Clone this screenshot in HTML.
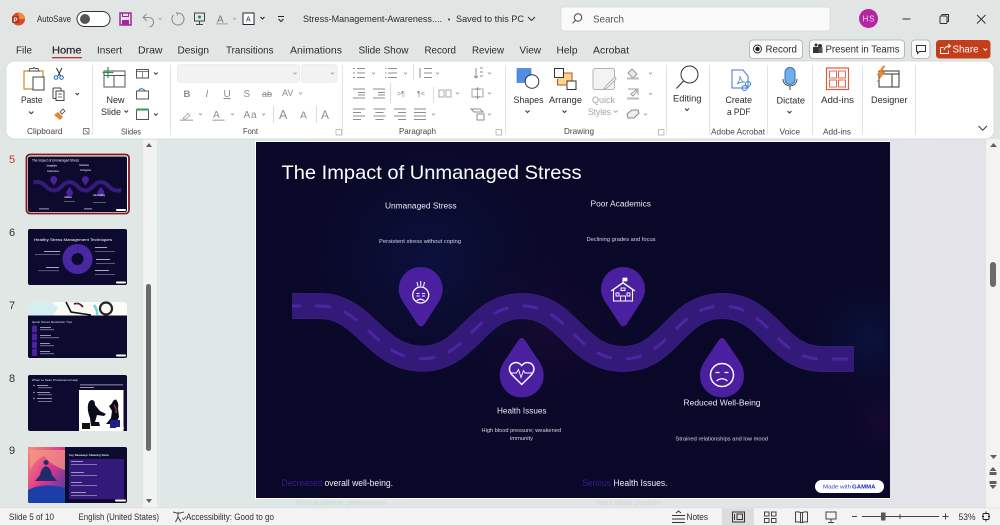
<!DOCTYPE html>
<html lang="en"><head><meta charset="utf-8"><title>PowerPoint</title>
<style>
html,body{margin:0;padding:0;background:#e1e6e4;overflow:hidden}
svg{display:block;font-family:"Liberation Sans",sans-serif}
.t{font-size:9.5px;fill:#2b2b2b}
.g{font-size:9px;fill:#a3a3a3}
.l{font-size:8.5px;fill:#444}
.ic{fill:none;stroke:#555;stroke-width:1}
.ch{fill:none;stroke:#555;stroke-width:1}
.sl{fill:#fff}
.ttl{fill:#fff;font-size:19.5px}
</style></head><body>
<svg width="1000" height="525" viewBox="0 0 1000 525" xmlns="http://www.w3.org/2000/svg">
<defs>
<linearGradient id="cv" x1="0" x2="1" y1="0" y2="0"><stop offset="0" stop-color="#dfe8e6"/><stop offset=".45" stop-color="#e0e6e6"/><stop offset="1" stop-color="#e4e3ea"/></linearGradient>
<radialGradient id="sA" gradientUnits="userSpaceOnUse" cx="430" cy="260" r="170"><stop offset="0" stop-color="#0c1444" stop-opacity=".75"/><stop offset="1" stop-color="#0a0828" stop-opacity="0"/></radialGradient>
<radialGradient id="sB" gradientUnits="userSpaceOnUse" cx="550" cy="330" r="100"><stop offset="0" stop-color="#1c0a36" stop-opacity=".7"/><stop offset="1" stop-color="#0a0828" stop-opacity="0"/></radialGradient>
<radialGradient id="sC" gradientUnits="userSpaceOnUse" cx="870" cy="340" r="80"><stop offset="0" stop-color="#0b1a4a" stop-opacity=".6"/><stop offset="1" stop-color="#0a0828" stop-opacity="0"/></radialGradient>
<radialGradient id="sD" gradientUnits="userSpaceOnUse" cx="885" cy="420" r="60"><stop offset="0" stop-color="#1e0a3a" stop-opacity=".6"/><stop offset="1" stop-color="#0a0828" stop-opacity="0"/></radialGradient>
<linearGradient id="pink" x1="0" x2="1" y1="0" y2="1"><stop offset="0" stop-color="#f5907c"/><stop offset=".5" stop-color="#e0358c"/><stop offset="1" stop-color="#2a3fa8"/></linearGradient>
<g id="road">
<path d="M292 306H320C365 306 375 358.700 422 358.700C469 358.700 475 306 522 306C569 306 575 359 623 359C670 359 675 306 722 306C770 306 775 359 822 359H854" fill="none" stroke="#3a1c84" stroke-width="26"/>
<path d="M292 306H320C365 306 375 358.700 422 358.700C469 358.700 475 306 522 306C569 306 575 359 623 359C670 359 675 306 722 306C770 306 775 359 822 359H854" fill="none" stroke="#341a78" stroke-width="24.500"/>
<path d="M292 306H320C365 306 375 358.700 422 358.700C469 358.700 475 306 522 306C569 306 575 359 623 359C670 359 675 306 722 306C770 306 775 359 822 359H854" fill="none" stroke="#4b26a2" stroke-width="3" stroke-dasharray="16 14" stroke-dashoffset="7"/>
<path d="M398.700 289a22 22 0 1 1 44 0c0 8-4 13-7.500 18.500l-11 17q-3.300 3.600-6.500 0l-11-17c-3.500-5.500-8-10.500-8-18.500z" fill="#4a20a0"/>
<path d="M601 289a22 22 0 1 1 44 0c0 8-4 13-7.500 18.500l-11 17q-3.500 3.600-6.500 0l-11-17c-3.500-5.500-8-10.500-8-18.500z" fill="#4a20a0"/>
<path d="M521.700 338c1.500 0 2.500 1 3.500 2.500l10 15c4 6 8.500 11 8.500 20a22 22 0 0 1-44 0c0-9 4.500-14 8.500-20l10-15c1-1.500 2-2.500 3.500-2.500z" fill="#4a20a0"/>
<path d="M722 338c1.500 0 2.500 1 3.500 2.500l10 15c4 6 8.500 11 8.500 20a22 22 0 0 1-44 0c0-9 4.500-14 8.500-20l10-15c1-1.500 2-2.500 3.500-2.500z" fill="#4a20a0"/>
</g>
</defs>

<!-- window background -->
<rect width="1000" height="525" fill="#e1e6e4"/>
<rect x="157" y="139" width="829" height="369" fill="url(#cv)"/>
<rect x="0" y="139" width="143" height="369" fill="#e0e7e5"/>
<rect x="143" y="139" width="14" height="369" fill="#f1f3f2"/>
<rect x="986" y="139" width="14" height="369" fill="#f3f3f4"/>

<!-- title bar -->
<circle cx="18.500" cy="19" r="6.500" fill="#d9492b"/><path d="M18.500 12.500a6.500 6.500 0 0 1 6.500 6.500h-6.500z" fill="#f08a3c"/><rect x="12" y="16" width="7" height="7" rx="1" fill="#b7301a"/><text x="13.500" y="22" font-size="6" fill="#fff" font-weight="bold">P</text>
<text class="t" x="37" y="22" textLength="34" lengthAdjust="spacingAndGlyphs" style="font-size:9px">AutoSave</text>
<rect x="77" y="11.500" width="33" height="15" rx="7.500" fill="#fff" stroke="#333" stroke-width="1"/><circle cx="85" cy="19" r="5" fill="#555"/>
<path d="M120 13h11v12h-11z" fill="none" stroke="#a6249e" stroke-width="1.500"/><rect x="122.500" y="13" width="6" height="3.500" fill="none" stroke="#a6249e"/><rect x="122" y="20" width="7" height="5" fill="#a6249e"/>
<path d="M143 17.500l3.500-3.500M143 17.500l4 3.500M143.500 17.500h6a4.800 4.800 0 0 1 0 9.500" fill="none" stroke="#8a8f8e" stroke-width="1.100"/><path d="M158.500 18l1.500 1.500 1.500-1.500" class="ch" style="stroke:#aaa"/>
<path d="M178 13a6 6 0 1 1-4.500 2" fill="none" stroke="#8a8f8e" stroke-width="1.100"/><path d="M176 12.500l2 1-1 2" fill="none" stroke="#8a8f8e"/>
<rect x="194.500" y="13" width="10" height="8" fill="none" stroke="#444"/><path d="M199.500 21v3.500M196 24.500h7" stroke="#444" fill="none"/><circle cx="199.500" cy="17" r="1.500" fill="#1f8a5a"/>
<text x="217" y="22.500" font-size="10" fill="#777">A</text><rect x="216" y="23" width="12" height="1.600" fill="#bbb"/><path d="M233 18l1.500 1.500 1.500-1.500" class="ch" style="stroke:#aaa"/>
<rect x="243" y="13" width="11" height="11.500" fill="#fff" stroke="#223"/><text x="246" y="21.500" font-size="7" fill="#223">A</text><path d="M260.500 17l2 2 2-2" fill="none" stroke="#222"/>
<path d="M278 16.500h6M278.500 19l2.500 2.500 2.500-2.500" fill="none" stroke="#222"/>
<text class="t" x="303" y="22" textLength="139" lengthAdjust="spacingAndGlyphs">Stress-Management-Awareness....</text>
<circle cx="449" cy="19.500" r="1" fill="#333"/>
<text class="t" x="456" y="22" textLength="68" lengthAdjust="spacingAndGlyphs">Saved to this PC</text>
<path d="M528 17l3.500 3.500 3.500-3.500" fill="none" stroke="#333"/>
<rect x="561" y="7" width="269" height="24" rx="3" fill="#fafafa" stroke="#d5d8d7" stroke-width=".7"/>
<circle cx="578" cy="17.500" r="3.700" fill="none" stroke="#444"/><path d="M575.300 20.500l-2.800 2.800" stroke="#444"/>
<text x="593" y="22.500" font-size="10" fill="#555" textLength="31" lengthAdjust="spacingAndGlyphs">Search</text>
<circle cx="868.500" cy="18.500" r="9.500" fill="#b5259f"/><text x="862.500" y="21.500" font-size="8" fill="#f3d5ee" textLength="12">HS</text>
<path d="M902.500 19h8" stroke="#333"/><rect x="940" y="16" width="7" height="7.500" rx="1" fill="none" stroke="#333"/><path d="M942 16v-1.500h6.500v7H947" fill="none" stroke="#333"/><path d="M977 15l8.500 8.500M985.500 15l-8.500 8.500" stroke="#333"/>

<!-- tabs -->
<g class="tabs" font-size="10" fill="#2b2b2b">
<text x="16" y="53.500" textLength="16" lengthAdjust="spacingAndGlyphs">File</text>
<text x="52" y="53.500" textLength="29.500" lengthAdjust="spacingAndGlyphs" stroke="#2b2b2b" stroke-width=".25">Home</text>
<text x="97" y="53.500" textLength="25" lengthAdjust="spacingAndGlyphs">Insert</text>
<text x="138" y="53.500" textLength="24.500" lengthAdjust="spacingAndGlyphs">Draw</text>
<text x="177.500" y="53.500" textLength="31.500" lengthAdjust="spacingAndGlyphs">Design</text>
<text x="226" y="53.500" textLength="47.500" lengthAdjust="spacingAndGlyphs">Transitions</text>
<text x="290" y="53.500" textLength="52" lengthAdjust="spacingAndGlyphs">Animations</text>
<text x="358.500" y="53.500" textLength="50" lengthAdjust="spacingAndGlyphs">Slide Show</text>
<text x="424.500" y="53.500" textLength="31.500" lengthAdjust="spacingAndGlyphs">Record</text>
<text x="472" y="53.500" textLength="32" lengthAdjust="spacingAndGlyphs">Review</text>
<text x="519.500" y="53.500" textLength="21.500" lengthAdjust="spacingAndGlyphs">View</text>
<text x="556.500" y="53.500" textLength="21" lengthAdjust="spacingAndGlyphs">Help</text>
<text x="593" y="53.500" textLength="36" lengthAdjust="spacingAndGlyphs">Acrobat</text>
</g>
<rect x="52" y="57" width="30" height="1.300" fill="#b3372a"/>

<rect x="749.500" y="40" width="53" height="18.500" rx="3.500" fill="#fbfbfb" stroke="#a9acab" stroke-width=".8"/>
<circle cx="757.500" cy="49" r="4" fill="none" stroke="#222" stroke-width=".9"/><circle cx="757.500" cy="49" r="2.200" fill="#222"/>
<text class="t" x="765.500" y="52.500" textLength="31.500" lengthAdjust="spacingAndGlyphs" style="font-size:10px">Record</text>
<rect x="809.500" y="40" width="95" height="18.500" rx="3.500" fill="#fbfbfb" stroke="#a9acab" stroke-width=".8"/>
<rect x="813" y="47" width="6" height="6" fill="#333"/><circle cx="820" cy="46" r="2" fill="#333"/><rect x="818.500" y="47.500" width="4" height="5.500" fill="#555"/><circle cx="816" cy="45" r="1.500" fill="#333"/>
<text class="t" x="825.500" y="52.500" textLength="74" lengthAdjust="spacingAndGlyphs" style="font-size:10px">Present in Teams</text>
<rect x="911.500" y="40" width="18.500" height="18.500" rx="3.500" fill="#fbfbfb" stroke="#a9acab" stroke-width=".8"/>
<path d="M916.500 45.500h9v6h-6l-2 2v-2h-1z" fill="none" stroke="#333"/>
<rect x="936" y="40" width="54.500" height="18.500" rx="3.500" fill="#c43e1c"/>
<path d="M940.500 47.500h3M940.500 47.500v6h8v-3M944 50q1-4 6-4M948 44l2.500 2-2.500 2" fill="none" stroke="#fff" stroke-width=".9"/>
<text x="952.500" y="52.500" font-size="10" fill="#fff" textLength="26" lengthAdjust="spacingAndGlyphs">Share</text>
<path d="M983.500 48.500l1.800 1.800 1.800-1.800" fill="none" stroke="#fff"/>

<!-- ribbon -->
<rect x="6" y="61" width="988" height="78" rx="8" fill="#fff" stroke="#cfd3d2" stroke-width=".7"/>
<g stroke="#dcdcdc" stroke-width=".8">
<path d="M92.500 65v70M170.500 65v70M342.500 65v70M505.500 65v70M666.500 65v70M709.500 65v70M767.500 65v70M812.500 65v70M862.500 65v70M915.500 65v70"/>
</g>
<!-- clipboard -->
<path d="M24 71h19v18h-19z" fill="#fff" stroke="#d28b2a" stroke-width="1.200"/><path d="M29 71l1-2.500h3l1-1 1 1h3l1 2.500z" fill="#fff" stroke="#555"/><rect x="33" y="77" width="11" height="13" fill="#fff" stroke="#444"/>
<text class="t" x="21" y="103" textLength="21.500" lengthAdjust="spacingAndGlyphs">Paste</text><path d="M29 111.500l2.200 2.200 2.200-2.200" class="ch" style="stroke:#333"/>
<path d="M56.500 68l4 8M62 68l-4 8" stroke="#333" fill="none"/><circle cx="56" cy="77.500" r="1.800" fill="none" stroke="#1b66c4"/><circle cx="61.500" cy="77.500" r="1.800" fill="none" stroke="#1b66c4"/>
<rect x="53" y="88" width="8" height="10.500" rx="1" fill="#fff" stroke="#444"/><rect x="56" y="91" width="8" height="9.500" fill="#fff" stroke="#444"/><path d="M58 94h4M58 97h4" stroke="#444" stroke-width=".7"/>
<path d="M75.500 93l1.800 1.800 1.800-1.800" fill="none" stroke="#333"/>
<path d="M54 115l6 5 3-3-5-5z" fill="#e8832f"/><path d="M60 112l3-3 2 2-3 3z" fill="#fff" stroke="#444" stroke-width=".8"/>
<text class="l" x="27" y="134" textLength="35.500" lengthAdjust="spacingAndGlyphs">Clipboard</text><path d="M83.500 128.500h5.500v5.500h-5.500zM85 130l3 3" class="ic" style="stroke-width:.7"/>
<!-- slides -->
<rect x="104" y="71" width="21" height="16" fill="#fff" stroke="#555"/><path d="M104 75.500h21M114 75.500v11.500" stroke="#555" fill="none"/><path d="M102.500 72.500h11M108 67v11" stroke="#1e9a4b" stroke-width="1.200"/>
<text class="t" x="106.500" y="103" textLength="18" lengthAdjust="spacingAndGlyphs">New</text>
<text class="t" x="101" y="115" textLength="20" lengthAdjust="spacingAndGlyphs">Slide</text><path d="M124.500 110.500l1.800 1.800 1.800-1.800" fill="none" stroke="#333"/>
<rect x="136.500" y="69.500" width="12" height="8.500" fill="#fff" stroke="#555"/><path d="M136.500 71.500h12M142.500 71.500v6.500" stroke="#555" stroke-width=".7"/><path d="M154 72.500l1.800 1.800 1.800-1.800" fill="none" stroke="#333"/>
<rect x="136.500" y="91" width="12" height="8" fill="#fff" stroke="#555"/><path d="M145 91a4 4 0 0 0-5-2l-1.500 2" fill="none" stroke="#1b66c4"/>
<rect x="136.500" y="110" width="12" height="9.500" fill="#fff" stroke="#555"/><rect x="136.500" y="108.500" width="12" height="2" fill="#2e9c57"/><path d="M154 113.500l1.800 1.800 1.800-1.800" fill="none" stroke="#333"/>
<text class="l" x="121" y="134.500" textLength="20" lengthAdjust="spacingAndGlyphs">Slides</text>
<!-- font -->
<rect x="177.500" y="64.500" width="122" height="18" rx="3" fill="#f2f2f2" stroke="#e4e4e4" stroke-width=".6"/><path d="M293.500 72.500l1.500 1.500 1.500-1.500" fill="none" stroke="#aaa"/>
<rect x="301.500" y="64.500" width="35.500" height="18" rx="3" fill="#f2f2f2" stroke="#e4e4e4" stroke-width=".6"/><path d="M331 72.500l1.500 1.500 1.500-1.500" fill="none" stroke="#aaa"/>
<g font-size="10" fill="#8d8d8d">
<text x="183.500" y="97" font-weight="bold" font-size="9.500">B</text><text x="205.500" y="97" font-style="italic">I</text><text x="223.500" y="97" text-decoration="underline">U</text><text x="243.500" y="97">S</text><text x="262" y="97" text-decoration="line-through" font-size="9">ab</text><text x="282" y="96" font-size="9">AV</text>
<path d="M299 92.500l1.500 1.500 1.500-1.500" fill="none" stroke="#aaa"/>
<text x="213" y="118" font-size="10">A</text><text x="243.500" y="118" textLength="13">Aa</text>
<text x="279" y="119" font-size="12.500">A</text><text x="300" y="118.500" font-size="10.500">A</text><text x="321" y="119" font-size="12">A</text>
</g>
<path d="M183 118.500l5-5 2 2-5 4z" fill="#fff" stroke="#999" stroke-width=".8"/><rect x="180" y="119.500" width="13" height="1.500" fill="#bbb"/>
<rect x="212.500" y="119.500" width="12" height="1.500" fill="#bbb"/>
<path d="M199 113.500l1.500 1.500 1.500-1.500M231 113.500l1.500 1.500 1.500-1.500M262 113.500l1.500 1.500 1.500-1.500" fill="none" stroke="#aaa"/>
<path d="M273.500 106v17M316.500 106v17" stroke="#ddd"/>
<text class="l" x="243" y="134" textLength="15" lengthAdjust="spacingAndGlyphs">Font</text><path d="M336 129.500h5.500v5.500H336z" class="ic" style="stroke:#aaa;stroke-width:.7"/>
<!-- paragraph -->
<g stroke="#8d8d8d" stroke-width="1" fill="none">
<path d="M357 68.500h8M357 73h8M357 77.500h8M353 68.500h2M353 73h2M353 77.500h2M388 68.500h9M388 73h9M388 77.500h9M385 68.500h1.500M385 73h1.500M385 77.500h1.500M424 68.500h8M424 73h8M424 77.500h8M420 68v10"/>
<path d="M353 89h12M358 92.500h7M358 95h7M353 98h12M373 89h12M378 92.500h7M378 95h7M373 98h12"/>
<path d="M353 109h12M353 112.500h8M353 116h12M353 119.500h8M373.500 109h12M375.500 112.500h8M373.500 116h12M375.500 119.500h8M394 109h12M398 112.500h8M394 116h12M398 119.500h8M414 109h12M414 112.500h12M414 116h12M414 119.500h12"/>
<path d="M476 68v10M474 76l2 2 2-2M480 68h3M480 72h3M480 76h3"/>
<path d="M439 90h5v7h-5zM446 90h5v7h-5z" stroke-width=".7"/>
<path d="M472 89h11v8h-11zM477.500 87v12M475.500 90l2-2 2 2M475.500 96l2 2 2-2" stroke-width=".8"/>
<path d="M471 109h9l3 3h-9zM477 114h7v6h-7z"/>
</g>
<path d="M390.500 83v20M413.500 64v16M433.500 87v16" stroke="#ddd"/>
<g font-size="7" fill="#8d8d8d"><text x="397" y="96">&gt;¶</text><text x="417" y="96">¶&lt;</text></g>
<path d="M372 72.500l1.500 1.500 1.500-1.500M404 72.500l1.500 1.500 1.500-1.500M436 72.500l1.500 1.500 1.500-1.500M488 72.500l1.500 1.500 1.500-1.500M456 92.500l1.500 1.500 1.500-1.500M488 92.500l1.500 1.500 1.500-1.500M432 113.500l1.500 1.500 1.500-1.500M488 113.500l1.500 1.500 1.500-1.500" fill="none" stroke="#aaa"/>
<text class="l" x="399" y="134" textLength="37" lengthAdjust="spacingAndGlyphs">Paragraph</text><path d="M496 129.500h5.500v5.500H496z" class="ic" style="stroke:#aaa;stroke-width:.7"/>
<!-- drawing -->
<rect x="517" y="68.500" width="14" height="14" fill="#4f8ee0" stroke="#3b6fb5" stroke-width=".6"/><circle cx="532" cy="81.500" r="6.800" fill="#fff" stroke="#333"/>
<text class="t" x="513.500" y="103" textLength="30" lengthAdjust="spacingAndGlyphs">Shapes</text><path d="M525.500 110.500l2 2 2-2" fill="none" stroke="#333"/>
<rect x="558" y="73" width="14" height="12" fill="#f9d58c"/><path d="M558 73h14v12" fill="none" stroke="#d24a1a"/><rect x="554.500" y="68.500" width="9" height="9" fill="#fff" stroke="#333"/><rect x="567" y="81" width="9" height="8.500" fill="#fff" stroke="#333"/><path d="M557.500 79v6h10" fill="none" stroke="#d24a1a"/>
<text class="t" x="549" y="103" textLength="33" lengthAdjust="spacingAndGlyphs">Arrange</text><path d="M562.500 110.500l2 2 2-2" fill="none" stroke="#333"/>
<rect x="593" y="68.500" width="21.500" height="21" rx="2" fill="#f3f3f3" stroke="#b5b5b5"/><path d="M615 77l-9 9-2 3 3-1 9-9z" fill="#fff" stroke="#b0b0b0"/>
<text class="g" x="592" y="103" textLength="23" lengthAdjust="spacingAndGlyphs">Quick</text><text class="g" x="588" y="115" textLength="23" lengthAdjust="spacingAndGlyphs">Styles</text><path d="M614 110.500l1.800 1.800 1.800-1.800M649 72.500l1.500 1.500 1.500-1.500M649 93l1.500 1.500 1.500-1.500M644 113.500l1.500 1.500 1.500-1.500" fill="none" stroke="#aaa"/>
<path d="M628 73l4-4 5 5-4 4z" fill="#e8e8e8" stroke="#999"/><rect x="627" y="77.500" width="12" height="2" fill="#bbb"/>
<path d="M628 89h10v6" fill="none" stroke="#999"/><path d="M631 94l5-4 1 1-4 5z" fill="#fff" stroke="#999"/><rect x="627" y="97.500" width="12" height="2" fill="#bbb"/>
<path d="M627 114l5-4h6l1 3-5 5h-6z" fill="#eee" stroke="#888"/>
<text class="l" x="564" y="134" textLength="30" lengthAdjust="spacingAndGlyphs">Drawing</text><path d="M658.500 129.500h5.500v5.500h-5.500z" class="ic" style="stroke:#aaa;stroke-width:.7"/>
<!-- editing -->
<circle cx="689.500" cy="74.500" r="8.500" fill="#fff" stroke="#333" stroke-width="1"/><path d="M683.500 81l-7 7.500" stroke="#333" stroke-width="1.100"/>
<text class="t" x="673" y="101.500" textLength="28.500" lengthAdjust="spacingAndGlyphs">Editing</text><path d="M685 108.500l2 2 2-2" fill="none" stroke="#333"/>
<!-- acrobat -->
<path d="M732 70h11l5 6v12h-16z" fill="#fff" stroke="#3b7ad9" stroke-width="1"/><path d="M737 84q3-3 3-8q1 6 5 6q-5 0-8 2z" fill="none" stroke="#3b7ad9" stroke-width=".7"/><circle cx="748" cy="84" r="2.500" fill="none" stroke="#3b7ad9"/><circle cx="744.500" cy="88" r="2.500" fill="none" stroke="#3b7ad9"/>
<text class="t" x="725.500" y="103" textLength="26.500" lengthAdjust="spacingAndGlyphs">Create</text><text class="t" x="727" y="115" textLength="23.500" lengthAdjust="spacingAndGlyphs">a PDF</text>
<text class="l" x="711" y="134.500" textLength="54" lengthAdjust="spacingAndGlyphs">Adobe Acrobat</text>
<!-- voice -->
<rect x="785" y="67.500" width="10" height="17" rx="5" fill="#6fb0e8" stroke="#3571b5"/><path d="M783 79a7 7 0 0 0 14 0M790 86v4" fill="none" stroke="#444"/>
<text class="t" x="776.500" y="103.500" textLength="28.500" lengthAdjust="spacingAndGlyphs">Dictate</text><path d="M787.500 111l2 2 2-2" fill="none" stroke="#333"/>
<text class="l" x="779.500" y="134.500" textLength="20.500" lengthAdjust="spacingAndGlyphs">Voice</text>
<!-- add-ins -->
<rect x="826.500" y="68" width="22" height="21.500" fill="#fff" stroke="#e0593a" stroke-width="1.200"/><g fill="none" stroke="#e0593a" stroke-width=".9"><rect x="829.500" y="71" width="7" height="7"/><rect x="838.500" y="71" width="7" height="7"/><rect x="829.500" y="80" width="7" height="7"/><rect x="838.500" y="80" width="7" height="7"/></g>
<text class="t" x="821" y="103" textLength="33" lengthAdjust="spacingAndGlyphs">Add-ins</text>
<text class="l" x="823" y="134.500" textLength="28" lengthAdjust="spacingAndGlyphs">Add-ins</text>
<!-- designer -->
<rect x="879" y="71" width="20" height="16" fill="#fff" stroke="#333"/><path d="M879 74h20M892 74v13" stroke="#333" fill="none"/><path d="M883 66l-6 9h4l-4 7 8-10h-4l4-6z" fill="#f28a1d" stroke="#d96a10" stroke-width=".4"/>
<text class="t" x="871" y="103" textLength="36.500" lengthAdjust="spacingAndGlyphs">Designer</text>
<path d="M978.500 126l4.200 4.200 4.200-4.200" fill="none" stroke="#333"/>

<!-- thumbnails panel -->
<text x="9" y="163" font-size="11" fill="#c5391f">5</text>
<text x="9" y="236" font-size="11" fill="#333">6</text>
<text x="9" y="309" font-size="11" fill="#333">7</text>
<text x="9" y="382" font-size="11" fill="#333">8</text>
<text x="9" y="454" font-size="11" fill="#333">9</text>
<rect x="26.500" y="154.500" width="102.500" height="59" rx="3.500" fill="#fff" stroke="#7d1a1f" stroke-width="1.800"/>
<rect x="28" y="156.500" width="99" height="55.500" rx="2" fill="#0c0a2d"/>
<g transform="translate(28 156.500) scale(.1564) translate(-256 -142)"><use href="#road"/></g>
<g fill="#c9c7de" font-size="2.300">
<text x="32" y="161.500" fill="#f2f2f8" font-size="3.200" textLength="47">The Impact of Unmanaged Stress</text>
<text x="46" y="166.500" textLength="11">Unmanaged Stress</text><text x="79" y="166" textLength="10">Poor Academics</text>
<text x="47" y="172" textLength="12">Persistent stress</text><text x="80" y="171" textLength="11">Declining grades</text>
<text x="64" y="198" textLength="8">Health Issues</text><text x="93" y="196" textLength="12">Reduced Well-Being</text>
<rect x="64" y="201" width="11" height=".6" fill="#8f8bb0"/><rect x="93" y="202" width="13" height=".6" fill="#8f8bb0"/>
<rect x="39" y="208.500" width="10" height=".8" fill="#c9c7de"/><rect x="84" y="208.500" width="8" height=".8" fill="#c9c7de"/></g>
<rect x="116" y="209" width="10" height="2" rx="1" fill="#fff"/>

<rect x="28" y="229" width="99" height="56" rx="2" fill="#0d0a30"/>
<text x="34" y="241" font-size="4" fill="#fff" textLength="78" lengthAdjust="spacingAndGlyphs">Healthy Stress Management Techniques</text>
<circle cx="77.500" cy="259" r="15" fill="#4a28a4"/><circle cx="77.500" cy="259" r="6" fill="#0c0a2a"/>
<g stroke="#3c1e8c" stroke-width=".5"><path d="M77.500 244v9M88 248l-6 6M92 259h-9M88 270l-6-6M77.500 274v-9M67 270l6-6M63 259h9M67 248l6 6"/></g>
<g fill="#d2d0e4"><rect x="44" y="251" width="16" height=".8"/><rect x="35" y="254" width="25" height=".6" fill="#8f8bb0"/><rect x="46" y="267" width="13" height=".8"/><rect x="38" y="270.500" width="21" height=".6" fill="#8f8bb0"/>
<rect x="95" y="247" width="12" height=".8"/><rect x="95" y="251" width="20" height=".6" fill="#8f8bb0"/><rect x="96" y="259" width="14" height=".8"/><rect x="96" y="263" width="19" height=".6" fill="#8f8bb0"/><rect x="95" y="270" width="14" height=".8"/><rect x="95" y="274" width="20" height=".6" fill="#8f8bb0"/></g>
<rect x="116" y="281.500" width="10" height="2" rx="1" fill="#fff"/>

<rect x="28" y="302" width="99" height="56" rx="2" fill="#0d0a30"/>
<path d="M28 304q0-2 2-2h95q2 0 2 2v11.500H28z" fill="#fbfbf6"/><path d="M28 304q0-2 2-2h22l6 6-5 7.500H28z" fill="#d5eff0"/>
<path d="M66 302l5 10 20 3M74 304q5-2 9 3" fill="none" stroke="#111" stroke-width="1.600"/><path d="M75 304q4-1 7 3" fill="none" stroke="#d03a6a" stroke-width=".8"/><circle cx="106" cy="308.500" r="6" fill="none" stroke="#222" stroke-width="2.200"/><path d="M94 305q4 6 3 10" fill="none" stroke="#6fd5d8" stroke-width="2.500"/>
<text x="32" y="323" font-size="3" fill="#e8e8f2" textLength="40">Quick Stress Reduction Tips</text>
<g fill="#4a24a0"><rect x="32" y="325.500" width="5" height="7" rx="1.500"/><rect x="32" y="333.500" width="5" height="7" rx="1.500"/><rect x="32" y="341.500" width="5" height="7" rx="1.500"/><rect x="32" y="349" width="5" height="7" rx="1.500"/></g>
<g fill="#b8b6d0"><rect x="40" y="327" width="11" height=".8"/><rect x="40" y="329.500" width="14" height=".6"/><rect x="40" y="335" width="11" height=".8"/><rect x="40" y="337.500" width="19" height=".6"/><rect x="40" y="343" width="10" height=".8"/><rect x="40" y="345.500" width="14" height=".6"/><rect x="40" y="351" width="10" height=".8"/><rect x="40" y="353.500" width="14" height=".6"/></g>
<rect x="116" y="354.500" width="10" height="2" rx="1" fill="#fff"/>

<rect x="28" y="375" width="99" height="56" rx="2" fill="#0d0a30"/>
<text x="32" y="381" font-size="3" fill="#e9e8f2" textLength="46">When to Seek Professional Help</text>
<g fill="#b8b6d0"><circle cx="34" cy="385.500" r=".7"/><rect x="37" y="385" width="11" height=".8"/><rect x="38" y="387.500" width="14" height=".6"/><circle cx="34" cy="392.500" r=".7"/><rect x="37" y="392" width="13" height=".8"/><rect x="38" y="394.500" width="14" height=".6"/><circle cx="34" cy="398.500" r=".7"/><rect x="37" y="398" width="15" height=".8"/><rect x="38" y="401" width="14" height=".6"/>
<rect x="80" y="384.500" width="43" height=".8"/><rect x="80" y="387" width="14" height=".8"/></g>
<rect x="79" y="390" width="44.500" height="41" fill="#fff"/><rect x="123.500" y="384" width="3.500" height="47" fill="#120c35"/>
<path d="M88 405q1-5 4-5t3 5l5 6 6 3-2 2-7-1-2 7h4l1 4h-9l-1-8q-3-8-2-13z" fill="#0a0c1a"/><path d="M113 401q3-3 4 0 2 3 1 7l1 9-3 7h-10l5-6 1-7-3-5q3-2 4-5z" fill="#0b0b18"/><rect x="110" y="420" width="10" height="8" fill="#1a1f8a"/><path d="M114 405q3 4 2 8" stroke="#d83a7a" fill="none"/><path d="M82 423h8v6h-8z" fill="#111"/>
<rect x="116" y="427" width="8" height="2" rx="1" fill="#fff"/>

<rect x="28" y="447" width="99" height="56" rx="2" fill="#0d0a30"/>
<path d="M30 447h35v56H30q-2 0-2-2v-52q0-2 2-2z" fill="url(#pink)"/>
<path d="M28 490q15-8 37-2v15H30q-2 0-2-2z" fill="#1c3ea8"/><path d="M30 470q5-10 14-14 8 10 21 14v-20H30z" fill="#f59a82" opacity=".7"/><path d="M46 465a2.500 2.500 0 1 1 .1 0zM46 466q-5 2-6 9l-5 6h22l-5-6q-1-7-6-9z" fill="#1f2c6e"/>
<text x="69" y="456" font-size="3" fill="#fff" textLength="40">Key Takeaways: Mastering Stress</text>
<rect x="69" y="459" width="55" height="40" fill="#33197a"/>
<g fill="#b8b6d0"><rect x="71" y="461" width="12" height=".8"/><rect x="71" y="464" width="26" height=".6"/><rect x="71" y="472" width="13" height=".8"/><rect x="71" y="475" width="26" height=".6"/><rect x="71" y="482" width="11" height=".8"/><rect x="71" y="485" width="26" height=".6"/><rect x="71" y="492" width="15" height=".8"/><rect x="71" y="495" width="26" height=".6"/></g>
<rect x="115" y="499.500" width="11" height="2" rx="1" fill="#fff"/>

<!-- thumb scrollbar -->
<path d="M146 147l3-4 3 4z" fill="#5f5f5f"/><rect x="146" y="284" width="5" height="167" rx="2.500" fill="#6a6a6a"/><path d="M146 499l3 4 3-4z" fill="#5f5f5f"/>

<!-- right scrollbar -->
<path d="M990 147l3.500-4 3.500 4z" fill="#5f5f5f"/><rect x="990" y="262" width="6" height="25" rx="3" fill="#6a6a6a"/><path d="M990 455l3.500 4 3.500-4z" fill="#5f5f5f"/>
<path d="M993 466l3.500 4h-7zM989.500 471h7v3h-7z" fill="#5f5f5f" transform="translate(0 1)"/><path d="M989.500 481h7v3h-7zM989.500 485h7l-3.500 4z" fill="#5f5f5f"/>

<!-- ghost notes text -->
<text x="296" y="505" font-size="7" fill="#cdd7da" textLength="90" lengthAdjust="spacingAndGlyphs">Poor academic performance</text>
<text x="597" y="505" font-size="7" fill="#d1d6dc" textLength="64" lengthAdjust="spacingAndGlyphs">heart blood pressure</text>

<!-- slide -->
<rect x="255" y="141" width="635" height="358" fill="#fff"/>
<rect x="256" y="142" width="634" height="356" fill="#0a0828"/>
<rect x="256" y="142" width="634" height="356" fill="url(#sA)"/>
<rect x="256" y="142" width="634" height="356" fill="url(#sB)"/>
<rect x="256" y="142" width="634" height="356" fill="url(#sC)"/>
<rect x="256" y="142" width="634" height="356" fill="url(#sD)"/>
<use href="#road"/>

<text class="ttl" x="281.500" y="179" textLength="300" lengthAdjust="spacingAndGlyphs">The Impact of Unmanaged Stress</text>
<g fill="#e8e8f2" font-size="8">
<text x="385" y="208.500" textLength="71.500" lengthAdjust="spacingAndGlyphs">Unmanaged Stress</text>
<text x="590.500" y="206.500" textLength="60.500" lengthAdjust="spacingAndGlyphs">Poor Academics</text>
<text x="497" y="413.500" textLength="49.500" lengthAdjust="spacingAndGlyphs">Health Issues</text>
<text x="683.500" y="405.500" textLength="77" lengthAdjust="spacingAndGlyphs">Reduced Well-Being</text>
</g>
<g fill="#d6d6e4" font-size="5.500">
<text x="379" y="243" textLength="82" lengthAdjust="spacingAndGlyphs">Persistent stress without coping</text>
<text x="586.500" y="241" textLength="69" lengthAdjust="spacingAndGlyphs">Declining grades and focus</text>
<text x="481.500" y="432" textLength="79.500" lengthAdjust="spacingAndGlyphs">High blood pressure; weakened</text>
<text x="510" y="440" textLength="23" lengthAdjust="spacingAndGlyphs">immunity</text>
<text x="675.500" y="440.500" textLength="92.500" lengthAdjust="spacingAndGlyphs">Strained relationships and low mood</text>
</g>
<g font-size="9">
<text x="281.500" y="486" fill="#3b1c8f" textLength="41" lengthAdjust="spacingAndGlyphs">Decreased</text>
<text x="324.500" y="486" fill="#eeeef6" textLength="68.500" lengthAdjust="spacingAndGlyphs">overall well-being.</text>
<text x="582" y="486" fill="#3b1c8f" textLength="29" lengthAdjust="spacingAndGlyphs">Serious</text>
<text x="613.500" y="486" fill="#eeeef6" textLength="54" lengthAdjust="spacingAndGlyphs">Health Issues.</text>
</g>
<rect x="815" y="480" width="69" height="13" rx="6.500" fill="#fff"/>
<text x="823" y="488.500" font-size="5.200" fill="#2a3fc0" textLength="28" lengthAdjust="spacingAndGlyphs">Made with</text>
<text x="852" y="488.500" font-size="5.200" font-weight="bold" fill="#1a2fc0" textLength="23.500" lengthAdjust="spacingAndGlyphs">GAMMA</text>

<!-- pin icons -->
<g fill="none" stroke="#fff" stroke-width="1.300">
<circle cx="420.700" cy="295" r="8"/>
<path d="M417 282l1 4.500M420.700 281v5M424.500 282l-1 4.500M416.500 293.500h3M422 293.500h3M416.500 296h3M422 296h3" stroke-width="1"/>
<path d="M416.500 301q4-3.500 8 0" stroke-width="1.100"/>
<path d="M613.500 301v-11.500l9.500-6.500 9.500 6.500V301zM611 291l12-8.500 12 8.500M623 283v-5" stroke-width="1.100"/>
<path d="M623 278h4v3h-4" fill="#fff" stroke-width=".7"/>
<path d="M620.500 301v-5h5v5M616 293h3v3h-3zM627 293h3v3h-3zM621 288h4v2.500h-4z" stroke-width=".9"/>
<path d="M521.700 384.500l-10-10q-4.500-6 0-10.500 5.500-3.700 10 1.500 4.500-5.200 10-1.500 4.500 4.500 0 10.500z" stroke-width="1.400"/>
<path d="M510.500 373h6l2-3.500 2.500 8 2.500-7 1.500 2.500h7" stroke-width=".9"/>
<circle cx="722" cy="375" r="11.500" stroke-width="1.500"/>
<path d="M715.500 372.500h4M724.500 372.500h4M716.500 381q5.500-4.500 11 0" stroke-width="1.300"/>
</g>

<!-- status bar -->
<rect x="0" y="508" width="1000" height="17" fill="#f3f3f3"/>
<rect x="0" y="507.500" width="1000" height=".7" fill="#dcdcdc"/>
<g fill="#2e2e2e" font-size="9">
<text x="9" y="520" textLength="45" lengthAdjust="spacingAndGlyphs">Slide 5 of 10</text>
<text x="78.500" y="520" textLength="80.500" lengthAdjust="spacingAndGlyphs">English (United States)</text>
<text x="186" y="520" textLength="88" lengthAdjust="spacingAndGlyphs">Accessibility: Good to go</text>
<text x="686.500" y="520" textLength="21.500" lengthAdjust="spacingAndGlyphs">Notes</text>
<text x="958.500" y="520" textLength="17" lengthAdjust="spacingAndGlyphs">53%</text>
</g>
<path d="M173 512l4 1h3l4-1M178 513v4l-2.500 5M178 517l3 5" fill="none" stroke="#333" stroke-width=".9"/><path d="M182 518l1.500 1.500 2.500-3" fill="none" stroke="#333" stroke-width=".7"/>
<path d="M672 515.500h13M672 519h13M672 522.500h13M676 513l2.500-2 2.500 2" fill="none" stroke="#333"/>
<rect x="722" y="508.500" width="32" height="16.500" fill="#dcdcdc"/>
<rect x="732.500" y="512" width="12" height="10" fill="none" stroke="#333"/><rect x="737" y="514" width="5.500" height="5.500" fill="none" stroke="#333"/><path d="M734.500 514v6" stroke="#333"/>
<g fill="none" stroke="#444"><rect x="764.500" y="512" width="4.500" height="4"/><rect x="771.500" y="512" width="4.500" height="4"/><rect x="764.500" y="518.500" width="4.500" height="4"/><rect x="771.500" y="518.500" width="4.500" height="4"/>
<path d="M795.500 512q3-.5 5 .5v10q-2-1-5-.5zM807.500 512q-3-.5-5 .5v10q2-1 5-.5zM800.500 512.500h2v10h-2"/>
<rect x="826" y="512" width="10" height="7"/><path d="M831 519v3M828 522.500h6"/></g>
<path d="M852 516.500h5M862 516.500h77M900 514v5M942.500 516.500h6M945.500 513.500v6" stroke="#444" fill="none"/>
<rect x="881" y="512.500" width="4.500" height="8" fill="#555"/>
<path d="M982 516.500h2M988 516.500h2M986 511.500v2M986 519.500v2" stroke="#222"/><rect x="983" y="513.500" width="6" height="6" rx="1" fill="none" stroke="#222"/>
</svg>
</body></html>
